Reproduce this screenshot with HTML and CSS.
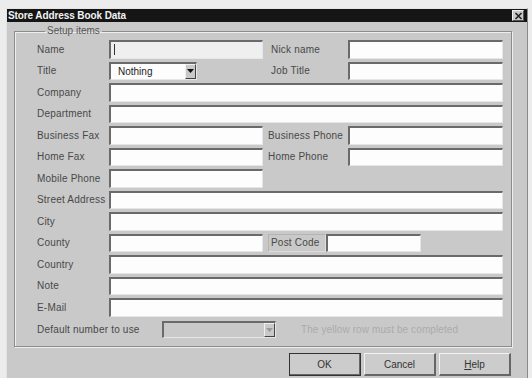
FILE: index.html
```html
<!DOCTYPE html>
<html>
<head>
<meta charset="utf-8">
<link rel="stylesheet" href="styles.css">
</head>
<body>
<div class="window">
  <div class="titlebar">
    <span class="title">Store Address Book Data</span>
    <span class="close"><svg width="9" height="8" viewBox="0 0 9 8"><path d="M1.5 1 L7.5 7 M7.5 1 L1.5 7" stroke="#222" stroke-width="1.6"/></svg></span>
  </div>
  <div class="content">
    <fieldset class="group">
      <legend class="legend">Setup items</legend>
      <div class="grid">
        <label class="lbl">Name</label>
        <div class="field required"><span class="caret"></span></div>
        <span></span>
        <label class="lbl lbl-r">Nick name</label>
        <div class="field"></div>

        <label class="lbl">Title</label>
        <div class="title-cell">
          <div class="select"><span class="select-text">Nothing</span><span class="arrow"><svg width="7" height="4" viewBox="0 0 7 4"><path d="M0 0 H7 L3.5 4 Z" fill="#111"/></svg></span></div>
        </div>
        <span></span>
        <label class="lbl lbl-r">Job Title</label>
        <div class="field"></div>

        <label class="lbl">Company</label>
        <div class="field wide"></div>

        <label class="lbl">Department</label>
        <div class="field wide"></div>

        <label class="lbl">Business Fax</label>
        <div class="field"></div>
        <span></span>
        <label class="lbl lbl-r0">Business Phone</label>
        <div class="field"></div>

        <label class="lbl">Home Fax</label>
        <div class="field"></div>
        <span></span>
        <label class="lbl lbl-r0">Home Phone</label>
        <div class="field"></div>

        <label class="lbl">Mobile Phone</label>
        <div class="field"></div>
        <span class="rest"></span>

        <label class="lbl">Street Address</label>
        <div class="field wide"></div>

        <label class="lbl">City</label>
        <div class="field wide"></div>

        <label class="lbl">County</label>
        <div class="field"></div>
        <span></span>
        <div class="postcode-cell">
          <label class="lbl postcode-lbl">Post Code</label>
          <div class="field postcode"></div>
        </div>

        <label class="lbl">Country</label>
        <div class="field wide"></div>

        <label class="lbl">Note</label>
        <div class="field wide"></div>

        <label class="lbl">E-Mail</label>
        <div class="field wide"></div>

        <div class="default-row">
          <label class="lbl default-lbl">Default number to use</label>
          <div class="select disabled"><span class="select-text"></span><span class="arrow"><svg width="7" height="4" viewBox="0 0 7 4"><path d="M0 0 H7 L3.5 4 Z" fill="#999"/></svg></span></div>
          <span class="hint">The yellow row must be completed</span>
        </div>
      </div>
    </fieldset>
    <div class="buttons">
      <button class="btn default">OK</button>
      <button class="btn">Cancel</button>
      <button class="btn"><u>H</u>elp</button>
    </div>
  </div>
</div>
</body>
</html>
```
FILE: styles.css
```css
html, body {
  margin: 0;
  padding: 0;
  background: #ececec;
  font-family: "Liberation Sans", Arial, sans-serif;
  overflow: hidden;
}
.window {
  margin: 8px 0 0 6px;
  width: 522px;
  height: 380px;
  background: #c9c9c9;
  border-top: 1px solid #e4e4e4;
  border-left: 1px solid #e4e4e4;
  border-right: 1px solid #8a8a8a;
  box-sizing: border-box;
}
.titlebar {
  height: 13px;
  background: #151515;
  display: flex;
  align-items: center;
  justify-content: space-between;
  padding: 0 3px 0 1px;
}
.title {
  color: #f2f2f2;
  font-weight: bold;
  font-size: 10px;
  letter-spacing: -0.1px;
  line-height: 13px;
}
.close {
  width: 12px;
  height: 11px;
  background: #c8c8c8;
  border-top: 1px solid #f0f0f0;
  border-left: 1px solid #f0f0f0;
  border-right: 1px solid #555;
  border-bottom: 1px solid #555;
  box-sizing: border-box;
  display: flex;
  align-items: center;
  justify-content: center;
}
.content {
  padding: 3px 0 0 7px;
}
.group {
  margin: 0;
  width: 498px;
  box-sizing: border-box;
  border: 1px solid #8c8c8c;
  box-shadow: inset 1px 1px 0 #eeeeee, 1px 1px 0 #eeeeee;
  padding: 3px 6px 6px 22px;
  height: 322px;
}
.legend {
  font-size: 10px;
  line-height: 12px;
  color: #555;
  padding: 0 2px;
  margin-left: 8px;
}
.grid {
  display: grid;
  grid-template-columns: 72px 154px 5px 80px 155px;
  grid-auto-rows: 18.5px;
  row-gap: 3px;
}
.lbl {
  font-size: 10px;
  color: #484848;
  display: flex;
  align-items: center;
  white-space: nowrap;
  letter-spacing: 0.2px;
}
.lbl-r { padding-left: 3px; }
.lbl-r0 { padding-left: 0; }
.field {
  background: #fdfdfd;
  border-top: 2px solid #6a6a6a;
  border-left: 2px solid #6a6a6a;
  border-right: 1px solid #e6e6e6;
  border-bottom: 1px solid #e6e6e6;
  box-sizing: border-box;
  position: relative;
}
.field.required { background: #efefef; }
.caret {
  position: absolute;
  left: 3px;
  top: 2px;
  width: 1px;
  height: 11px;
  background: #333;
}
.wide { grid-column: 2 / 6; }
.rest { grid-column: 3 / 6; }
.title-cell { display: flex; }
.select {
  width: 88px;
  height: 100%;
  background: #fdfdfd;
  border-top: 2px solid #6a6a6a;
  border-left: 2px solid #6a6a6a;
  border-right: 1px solid #e6e6e6;
  border-bottom: 1px solid #e6e6e6;
  box-sizing: border-box;
  display: flex;
  align-items: stretch;
}
.select-text {
  flex: 1;
  font-size: 10px;
  color: #222;
  padding-left: 7px;
  display: flex;
  align-items: center;
}
.arrow {
  width: 11px;
  background: #c9c9c9;
  border-top: 1px solid #f0f0f0;
  border-left: 1px solid #f0f0f0;
  border-right: 1px solid #444;
  border-bottom: 1px solid #444;
  box-sizing: border-box;
  display: flex;
  align-items: center;
  justify-content: center;
}
.postcode-cell {
  grid-column: 4 / 6;
  display: flex;
}
.postcode-lbl {
  width: 58px;
  box-sizing: border-box;
  padding-left: 2px;
  border: 1px solid #b4b4b4;
  border-right-color: #dedede;
  border-bottom-color: #dedede;
}
.postcode {
  width: 95px;
}
.default-row {
  grid-column: 1 / 6;
  display: flex;
  align-items: stretch;
  margin-top: 1px;
}
.default-lbl {
  width: 125px;
}
.select.disabled {
  width: 114px;
  background: #c9c9c9;
}
.hint {
  margin-left: 25px;
  font-size: 10px;
  color: #ababab;
  display: flex;
  align-items: center;
  white-space: nowrap;
  letter-spacing: 0.1px;
}
.buttons {
  display: flex;
  justify-content: flex-end;
  gap: 3px;
  padding: 6px 16px 0 0;
}
.btn {
  width: 72px;
  height: 23px;
  margin: 0;
  padding: 0;
  font-family: "Liberation Sans", Arial, sans-serif;
  font-size: 10px;
  color: #333;
  background: #cccccc;
  border-top: 1px solid #f2f2f2;
  border-left: 1px solid #f2f2f2;
  border-right: 2px solid #666;
  border-bottom: 2px solid #666;
  box-sizing: border-box;
}
.btn.default {
  outline: 1px solid #333;
  outline-offset: -1px;
}
```
